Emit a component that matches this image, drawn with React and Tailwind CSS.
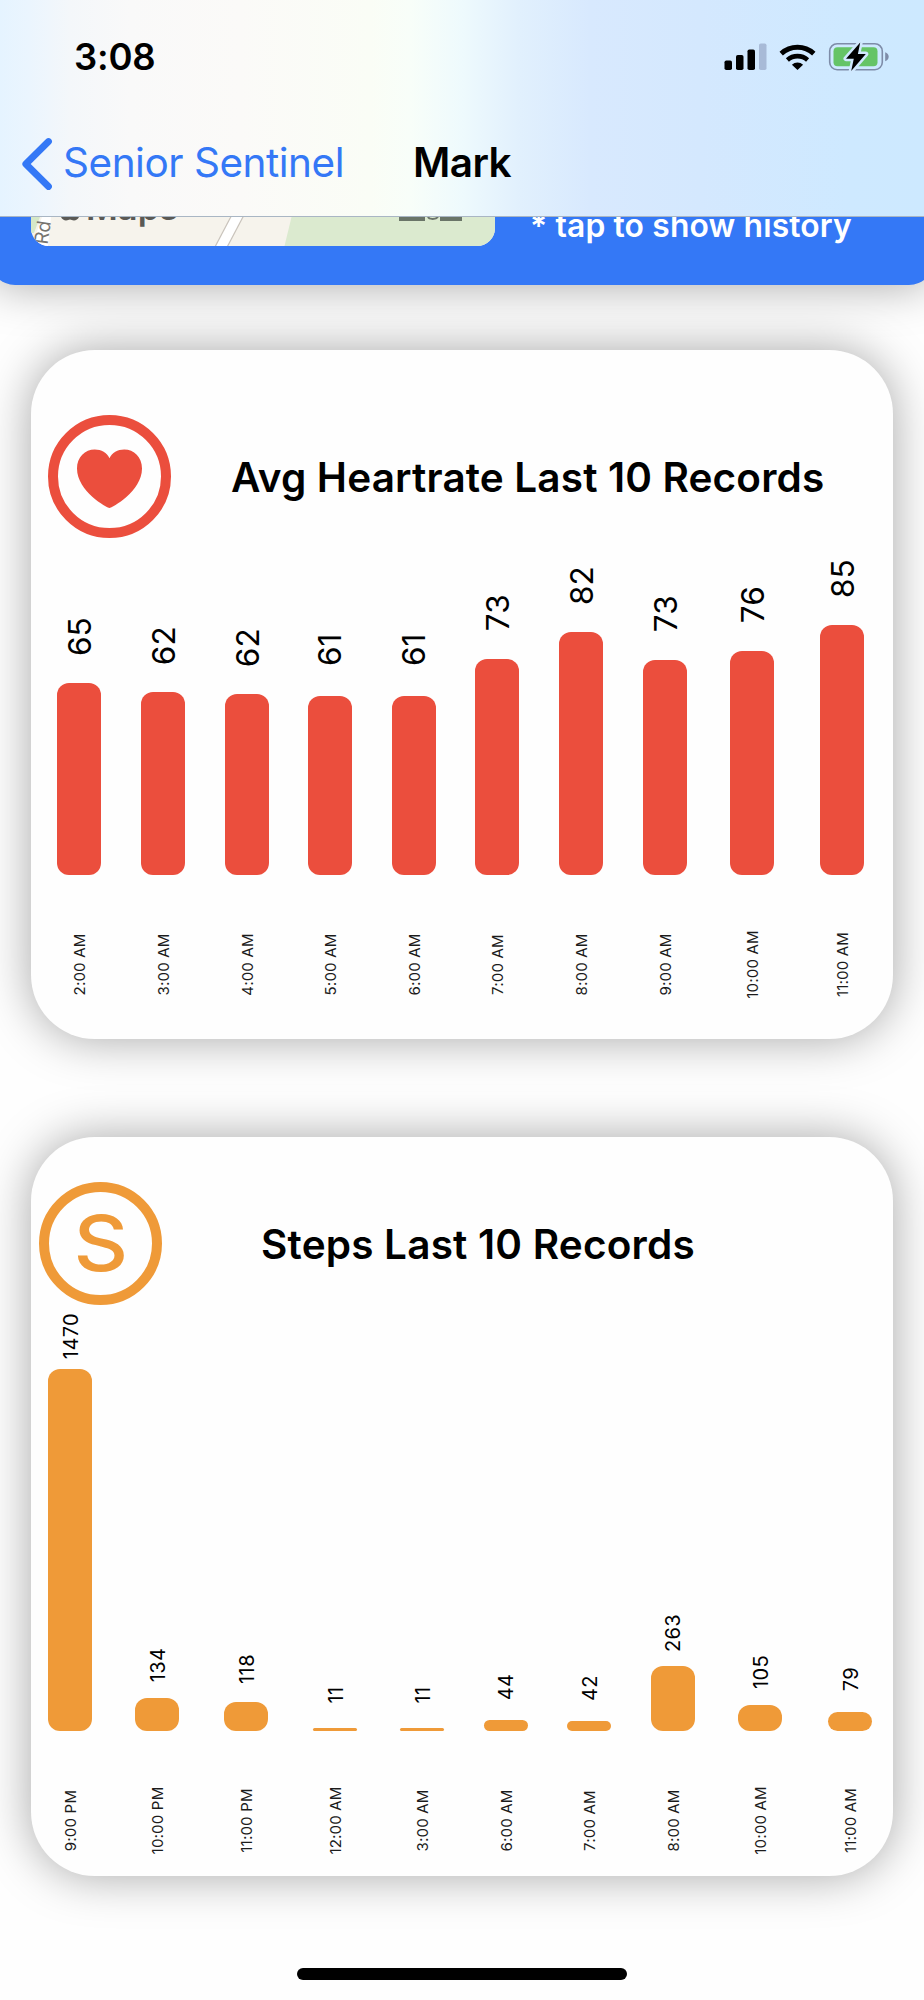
import React from "react";

const heartRecords = [
  { time: "2:00 AM", value: 65, height: 192, width: 64 },
  { time: "3:00 AM", value: 62, height: 183.5, width: 64 },
  { time: "4:00 AM", value: 62, height: 181.5, width: 63 },
  { time: "5:00 AM", value: 61, height: 179.5, width: 64 },
  { time: "6:00 AM", value: 61, height: 179.5, width: 64 },
  { time: "7:00 AM", value: 73, height: 216, width: 62 },
  { time: "8:00 AM", value: 82, height: 243, width: 65 },
  { time: "9:00 AM", value: 73, height: 215, width: 63 },
  { time: "10:00 AM", value: 76, height: 224.5, width: 72 },
  { time: "11:00 AM", value: 85, height: 250, width: 68 },
];

const stepRecords = [
  { time: "9:00 PM", value: 1470, height: 362.5, width: 64 },
  { time: "10:00 PM", value: 134, height: 33.5, width: 70 },
  { time: "11:00 PM", value: 118, height: 29, width: 67 },
  { time: "12:00 AM", value: 11, height: 3, width: 72 },
  { time: "3:00 AM", value: 11, height: 3, width: 62 },
  { time: "6:00 AM", value: 44, height: 11, width: 65 },
  { time: "7:00 AM", value: 42, height: 10, width: 61 },
  { time: "8:00 AM", value: 263, height: 65, width: 67 },
  { time: "10:00 AM", value: 105, height: 26, width: 68 },
  { time: "11:00 AM", value: 79, height: 19.5, width: 72 },
];

// Status bar icons
function StatusIcons() {
  return (
    <svg className="block" width="166" height="32" viewBox="724 41 166 32" fill="none">
      <rect x="724.5" y="60.5" width="7.5" height="9.5" rx="1.8" fill="#000" />
      <rect x="736" y="55" width="7.5" height="15" rx="1.8" fill="#000" />
      <rect x="747.5" y="49.5" width="7.5" height="20.5" rx="1.8" fill="#000" />
      <rect x="759" y="43.5" width="7.5" height="26.5" rx="1.8" fill="#a8bad7" />

      <path d="M781.2 53.6a24.2 24.2 0 0 1 32.6 0" stroke="#000" strokeWidth="5" />
      <path d="M787.4 60a15.2 15.2 0 0 1 20.2 0" stroke="#000" strokeWidth="4.6" />
      <path d="M797.5 70l-5.6-5.3a8.4 8.4 0 0 1 11.2 0z" fill="#000" />

      <rect x="829.7" y="43.7" width="52.6" height="26" rx="7.5" stroke="#7e8ca8" strokeWidth="1.6" />
      <path d="M885.2 52.3c2.1.8 3.5 2.5 3.5 4.5s-1.4 3.7-3.5 4.5z" fill="#7e8ca8" />
      <rect x="833.5" y="47.3" width="44" height="19" rx="4" fill="#65c466" />
      <path
        d="M860.2 42.5L846 58.7h7.8L851.2 71l14.6-17h-7.9z"
        fill="#000"
        stroke="#d0e8fe"
        strokeWidth="5"
        strokeLinejoin="round"
      />
      <path d="M860.2 42.5L846 58.7h7.8L851.2 71l14.6-17h-7.9z" fill="#000" />
    </svg>
  );
}

function Header() {
  return (
    <header className="relative z-10 h-[217px] border-b border-[#a9b6c4] bg-[linear-gradient(90deg,#e5f4ff_0px,#ebf5fe_30px,#f4f7fa_70px,#f9f9f9_130px,#fbfaf8_240px,#fafdf6_370px,#f8fef9_410px,#eefafd_462px,#e1f0fd_520px,#d8e9fe_590px,#d4e8fe_700px,#cee9ff_850px,#cde9ff_924px)]">
      <div className="flex h-[114px] items-center justify-between pl-[74px] pr-[34px]">
        <span className="text-[36.5px] font-semibold leading-none tracking-[-0.2px] text-black">3:08</span>
        <StatusIcons />
      </div>
      <div className="flex h-[99px] items-center pl-[21px]">
        <svg className="block shrink-0" width="32" height="54" viewBox="0 0 32 54" fill="none">
          <path d="M27.5 4.5L4.8 27L27.5 49.5" stroke="#3478f6" strokeWidth="6.8" strokeLinecap="round" strokeLinejoin="round" />
        </svg>
        <span className="ml-[10px] w-[350px] whitespace-nowrap text-[40.5px] leading-none tracking-[-0.48px] text-[#3478f6]">
          Senior Sentinel
        </span>
        <h1 className="text-[40.5px] font-semibold leading-none tracking-[-0.6px] text-black">Mark</h1>
      </div>
    </header>
  );
}

// Lower edge of the map preview that is left under the header
function MapPreview() {
  return (
    <div className="h-[29px] w-[464px] overflow-hidden rounded-b-[18px]">
      <svg className="block" width="464" height="29" viewBox="31 217 464 29">
        <rect x="31" y="217" width="464" height="29" fill="#f6f3ec" />
        <path d="M31 217h9l-6 16h-3z" fill="#d5e8c8" />
        <path d="M42 217h9l-3 29H32z" fill="#fff" />
        <path d="M291.5 217H495v29H284.5z" fill="#dbeacf" />
        <path d="M240 211l-20 38" stroke="#c9c3bb" strokeWidth="12" />
        <path d="M240 211l-20 38" stroke="#fff" strokeWidth="9.6" />
        <text x="86" y="219.5" fontSize="34.5" fontWeight="600" fill="#5a5955">Maps</text>
        <path d="M61 217h18c-1 2-3 3.5-5 3.5-2 0-2.5-1-4-1s-2 1-4 1-4-1.500-5-3.500z" fill="#5a5955" />
        <text transform="translate(47.5 245) rotate(-82)" fontSize="19" fill="#77746f">Rd</text>
        <path d="M399 217h26v4h-26zM440 217h22v4h-22z" fill="#6a7568" />
        <path d="M428 217c1 2.500 8 2.500 10 0" fill="none" stroke="#6a7568" strokeWidth="2" />
      </svg>
    </div>
  );
}

function LocationBanner() {
  return (
    <section className="-mx-[10px] flex h-[68px] items-start rounded-b-[25px] bg-[#3478f6] pl-[41px] shadow-[0_0_48px_rgba(0,0,0,0.35)]">
      <MapPreview />
      <p className="-mt-[11px] ml-[35px] whitespace-nowrap text-[31.8px] font-semibold leading-[40px] tracking-[0.15px] text-white">
        * tap to show history
      </p>
    </section>
  );
}

function BarColumn({ record, barClass, valueClass, valueBoxClass }) {
  return (
    <div className="flex shrink-0 flex-col items-center" style={{ width: record.width }}>
      <div className={`flex w-11 items-center justify-center ${valueBoxClass}`}>
        <span className={`-rotate-90 whitespace-nowrap leading-none text-black ${valueClass}`}>{record.value}</span>
      </div>
      <div className={`w-11 rounded-[12px] ${barClass}`} style={{ height: record.height }} />
      <div className="mt-[49px] flex h-20 w-11 items-center justify-center pl-px">
        <span className="-rotate-90 whitespace-nowrap text-[15px] leading-none tracking-[0.2px] text-[#1c1c1c]">
          {record.time}
        </span>
      </div>
    </div>
  );
}

function HeartrateCard() {
  return (
    <section className="mx-[31px] mt-[65px] flex h-[689px] flex-col rounded-[64px] bg-[#fefefe] shadow-[0_0_48px_rgba(0,0,0,0.35)]">
      <div className="flex items-center pl-[17px] pt-[65px]">
        <div className="flex h-[123px] w-[123px] items-center justify-center rounded-full border-[10px] border-[#eb4e3d] pt-1">
          <svg className="block" width="65" height="60" viewBox="0 0 64 60" preserveAspectRatio="none">
            <path
              d="M32 59C29.5 59 0 42 0 19.5C0 8 8 .5 17.5 .5C24 .5 29.5 3.6 32 9.3C34.5 3.6 40 .5 46.5 .5C56 .5 64 8 64 19.5C64 42 34.5 59 32 59z"
              fill="#eb4e3d"
            />
          </svg>
        </div>
        <h2 className="ml-[60px] mt-[3px] whitespace-nowrap text-[40.5px] font-semibold leading-none tracking-[0.15px] text-black">
          Avg Heartrate Last 10 Records
        </h2>
      </div>
      <div className="flex min-h-0 flex-1 items-end gap-5 pb-[35px] pl-[16px]">
        {heartRecords.map((record) => (
          <BarColumn
            key={record.time}
            record={record}
            barClass="bg-[#eb4e3d]"
            valueClass="text-[31.5px]"
            valueBoxClass="h-[92px] pl-px"
          />
        ))}
      </div>
    </section>
  );
}

function StepsCard() {
  return (
    <section className="mx-[31px] mt-[98px] flex h-[739px] flex-col rounded-[64px] bg-[#fefefe] shadow-[0_0_48px_rgba(0,0,0,0.35)]">
      <div className="flex h-[168px] items-center pl-[8px] pt-[45px]">
        <div className="flex h-[123px] w-[123px] items-center justify-center rounded-full border-[10px] border-[#ef9a38]">
          <span className="scale-x-110 text-[77px] font-medium leading-none text-[#ef9a38]">S</span>
        </div>
        <h2 className="ml-[99px] mt-[3px] whitespace-nowrap text-[40.5px] font-semibold leading-none tracking-[0.2px] text-black">
          Steps Last 10 Records
        </h2>
      </div>
      <div className="flex min-h-0 flex-1 items-end gap-5 pb-[16px] pl-[7px]">
        {stepRecords.map((record) => (
          <BarColumn
            key={record.time}
            record={record}
            barClass="bg-[#ef9a38]"
            valueClass="text-[20px] tracking-[0.4px]"
            valueBoxClass="h-[66px] pl-0.5"
          />
        ))}
      </div>
    </section>
  );
}

function App() {
  return (
    <div className="flex h-[2000px] w-[924px] flex-col overflow-hidden bg-[#fefefe] font-['Inter',sans-serif]">
      <Header />
      <main className="flex flex-col">
        <LocationBanner />
        <HeartrateCard />
        <StepsCard />
      </main>
      <div className="mt-[92px] h-3 w-[330px] self-center rounded-full bg-black" />
    </div>
  );
}

export default App;
